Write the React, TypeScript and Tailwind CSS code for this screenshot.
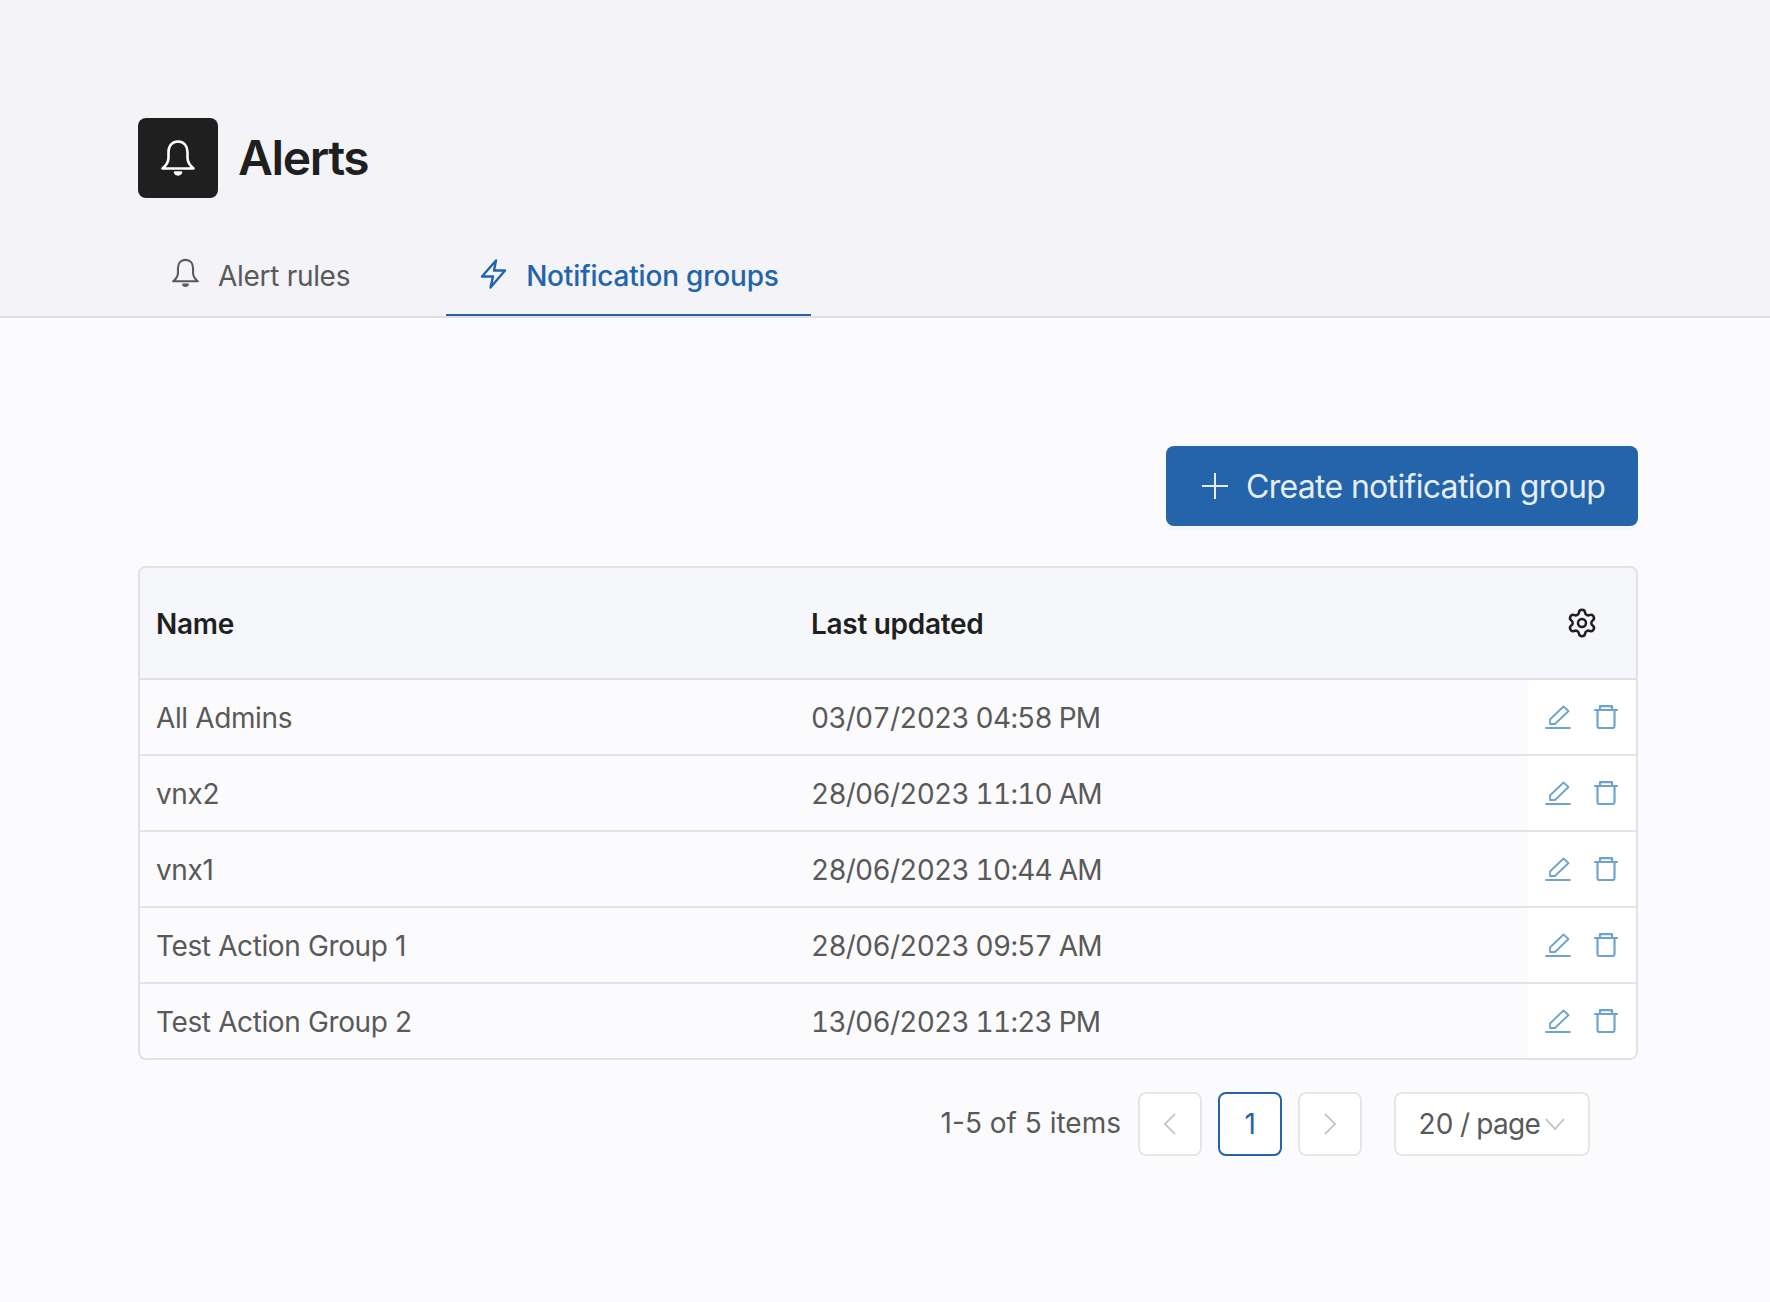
import React from "react";
import { Settings } from "lucide-react";

function BellIcon({ className }: { className: string }) {
  return (
    <svg viewBox="0 0 34 36" fill="none" className={className} stroke="currentColor" strokeWidth="2.6" strokeLinejoin="round" strokeLinecap="round">
      <path d="M17 1.5C11 1.5 7.5 6 7.5 12V18C7.5 22 5 25.5 1.5 28.5H32.5C29 25.5 26.5 22 26.5 18V12C26.5 6 23 1.5 17 1.5Z" />
      <path d="M14 32.5C15 35 19 35 20 32.5Z" fill="currentColor" />
    </svg>
  );
}

function BoltIcon({ className }: { className: string }) {
  return (
    <svg viewBox="0 0 26 30" fill="none" className={className} stroke="currentColor" strokeWidth="2.4" strokeLinejoin="round" strokeLinecap="round">
      <path d="M15.5 1.5L1.5 17.5H12.5L10 28.5L24.5 11.5H13.5L15.5 1.5Z" />
    </svg>
  );
}

function EditIcon() {
  return (
    <svg viewBox="0 0 26 24" fill="none" className="w-[26px] h-[24px] text-[#6ea3cf]" stroke="currentColor" strokeWidth="1.8" strokeLinejoin="round" strokeLinecap="round">
      <path d="M1 23H25" />
      <path d="M18.5 1.5L23.5 6L10 19H5V14.5L18.5 1.5Z" />
    </svg>
  );
}

function TrashIcon() {
  return (
    <svg viewBox="0 0 24 24" fill="none" className="w-[24px] h-[24px] text-[#6ea3cf]" stroke="currentColor" strokeWidth="2.2" strokeLinejoin="round" strokeLinecap="round">
      <path d="M1 5H23" />
      <path d="M6 5V1.2H18V5" />
      <path d="M3.5 5V21C3.5 22 4 23 5.5 23H18.5C20 23 20.5 22 20.5 21V5" />
    </svg>
  );
}

function Chevron({ dir, className }: { dir: "left" | "right" | "down"; className: string }) {
  const d = dir === "left" ? "M12 1L2 11L12 21" : dir === "right" ? "M2 1L12 11L2 21" : "M1 2L10 12L19 2";
  return (
    <svg viewBox={dir === "down" ? "0 0 20 14" : "0 0 14 22"} fill="none" className={className} stroke="currentColor" strokeWidth="1.6">
      <path d={d} />
    </svg>
  );
}

const rows = [
  ["All Admins", "03/07/2023 04:58 PM"],
  ["vnx2", "28/06/2023 11:10 AM"],
  ["vnx1", "28/06/2023 10:44 AM"],
  ["Test Action Group 1", "28/06/2023 09:57 AM"],
  ["Test Action Group 2", "13/06/2023 11:23 PM"],
];

export default function App() {
  return (
    <div className="min-h-[1302px] bg-[#fbfbfd] font-['Inter',sans-serif] text-[28px] tracking-[-0.3px] text-[#595959]">
      <header className="h-[318px] bg-[#f3f3f8] border-b-2 border-[#e0e0e2] pt-[118px] pl-[138px]">
        <div className="flex items-center gap-5">
          <div className="w-[80px] h-[80px] rounded-lg bg-[#1f1f1f] flex items-center justify-center text-white">
            <BellIcon className="w-[34px] h-[36px]" />
          </div>
          <h1 className="text-[48px] leading-none font-semibold tracking-[-1.4px] text-[#1f1f1f]">Alerts</h1>
        </div>
        <nav className="mt-[38px] flex gap-[62px] h-[80px]">
          <div className="flex items-center gap-[19px] px-[34px] h-full border-b-2 border-transparent">
            <BellIcon className="w-[27px] h-[30px] mb-[4px]" />
            <span className="pt-[2px]">Alert rules</span>
          </div>
          <div className="flex items-center gap-[19px] pl-[34px] pr-[32px] h-full border-b-2 border-[#2364aa] text-[#2364aa] font-medium tracking-[-0.2px]">
            <BoltIcon className="w-[27px] h-[30px] mb-[3px]" />
            <span className="pt-[2px]">Notification groups</span>
          </div>
        </nav>
      </header>
      <main className="pt-[128px] pl-[138px] pr-[132px]">
        <div className="flex justify-end">
          <button className="h-[80px] w-[472px] rounded-lg bg-[#2364aa] text-[#e6edf5] text-[32px] tracking-[-0.68px] flex items-center pl-[36px] gap-[18px] shadow-[0_4px_0_rgba(0,0,0,0.02)]">
            <svg viewBox="0 0 26 26" className="w-[26px] h-[26px]" stroke="currentColor" strokeWidth="2" fill="none">
              <path d="M13 0V26M0 13H26" />
            </svg>
            <span className="pt-[2px]">Create notification group</span>
          </button>
        </div>
        <div className="mt-[40px] border-2 border-[#e2e2e6] rounded-lg overflow-hidden">
          <div className="grid grid-cols-[655px_1fr_108px] h-[112px] bg-[#f6f7fb] border-b-2 border-[#e0e0e4] items-center text-[#1f1f1f] font-semibold">
            <div className="pl-4 pt-[2px]">Name</div>
            <div className="pl-4 pt-[2px]">Last updated</div>
            <div className="flex justify-center pb-[1px]">
              <Settings size={32} strokeWidth={1.9} className="text-[#1f1f1f]" />
            </div>
          </div>
          {rows.map(([name, updated], i) => (
            <div
              key={name}
              className={`grid grid-cols-[655px_1fr_108px] ${i < rows.length - 1 ? "h-[76px] border-b-2 border-[#e4e4e8]" : "h-[74px]"}`}
            >
              <div className="pl-4 pt-[1px] flex items-center tracking-[-0.38px]">{name}</div>
              <div className="pl-4 pt-[1px] flex items-center tabular-nums tracking-[-0.76px]">{updated}</div>
              <div className="bg-white flex items-center pl-[17px] gap-[23px]">
                <EditIcon />
                <TrashIcon />
              </div>
            </div>
          ))}
        </div>
        <div className="mt-[32px] flex justify-end items-center pr-[48px]">
          <span className="mr-[17px] pb-[2px] tracking-normal">1-5 of 5 items</span>
          <div className="w-[64px] h-[64px] rounded-lg border-2 border-[#e6e6e6] bg-white flex items-center justify-center text-[#bdbdbd]">
            <Chevron dir="left" className="w-[14px] h-[22px]" />
          </div>
          <div className="ml-[16px] w-[64px] h-[64px] rounded-lg border-2 border-[#2364aa] bg-white flex items-center justify-center text-[#2364aa]">
            1
          </div>
          <div className="ml-[16px] w-[64px] h-[64px] rounded-lg border-2 border-[#e6e6e6] bg-white flex items-center justify-center text-[#bdbdbd]">
            <Chevron dir="right" className="w-[14px] h-[22px]" />
          </div>
          <div className="ml-[32px] w-[196px] h-[64px] rounded-lg border-2 border-[#e6e6e6] bg-white flex items-center pl-[22px] gap-[5px]">
            <span className="tabular-nums tracking-[-0.65px]">20 / page</span>
            <Chevron dir="down" className="w-[20px] h-[14px] text-[#bdbdbd]" />
          </div>
        </div>
      </main>
    </div>
  );
}
